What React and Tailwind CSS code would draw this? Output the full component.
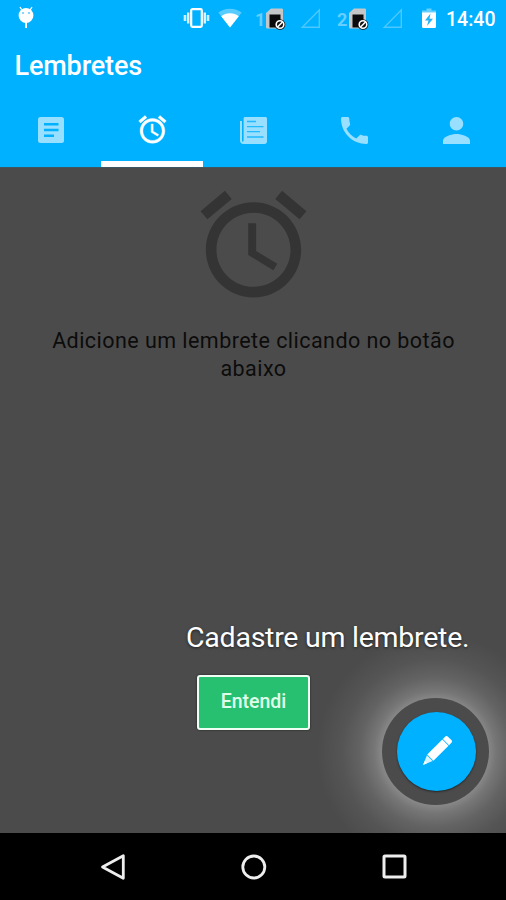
import clsx from "clsx";

const ALARM_PATH =
  "M22 5.72l-4.6-3.86-1.29 1.53 4.6 3.86L22 5.72zM7.88 3.39L6.6 1.86 2 5.71l1.29 1.53 4.59-3.85zM12.5 8H11v6l4.75 2.85.75-1.23-4-2.37V8zM12 4c-4.97 0-9 4.03-9 9s4.02 9 9 9c4.97 0 9-4.03 9-9s-4.03-9-9-9zm0 16c-3.87 0-7-3.13-7-7s3.13-7 7-7 7 3.13 7 7-3.13 7-7 7z";

function IconDebug({ className }) {
  return (
    <svg viewBox="0 0 18 23" fill="currentColor" className={className} aria-hidden>
      <path d="M3 1l2.5 4M15 1l-2.5 4" stroke="currentColor" strokeWidth="1.3" />
      <circle cx="9" cy="9.5" r="7.4" />
      <path d="M8.2 15h1.8v7H8.2z" />
      <circle cx="6" cy="7" r="1.1" fill="#66cfff" />
      <circle cx="12" cy="7" r="1.1" fill="#66cfff" />
    </svg>
  );
}

function IconVibrate({ className }) {
  return (
    <svg viewBox="0 0 27 22" fill="none" stroke="currentColor" className={className} aria-hidden>
      <rect x="8.2" y="2.2" width="10.6" height="17.6" rx="1.2" strokeWidth="2.2" />
      <path d="M5.2 5.5v11M21.8 5.5v11" strokeWidth="2.4" opacity=".85" />
      <path d="M2 8v6M25 8v6" strokeWidth="2.6" opacity=".8" />
    </svg>
  );
}

function IconWifi({ className }) {
  return (
    <svg viewBox="0 0 24 20" fill="currentColor" className={className} aria-hidden>
      <path d="M12 19.5L.3 4.6C3.5 2.2 7.5.8 12 .8s8.5 1.4 11.7 3.8z" opacity=".35" />
      <path d="M12 19.5L3.2 8.3C5.6 6.4 8.6 5.3 12 5.3s6.4 1.1 8.8 3z" />
    </svg>
  );
}

function IconSim({ className }) {
  return (
    <svg viewBox="0 0 20 22" className={className} aria-hidden>
      <path d="M5 .5h10.5c1 0 1.500.6 1.500 1.500v17c0 1-.6 1.500-1.500 1.500h-14C.5 20.500 0 20 0 19V5z" fill="#c4c6c8" />
      <path d="M3.500 6.500h11v13h-11z" fill="#0b0b0d" />
      <circle cx="14" cy="16.500" r="5.300" fill="#111" />
      <circle cx="14" cy="16.500" r="3.800" fill="none" stroke="#fff" strokeWidth="1.600" />
      <path d="M16.500 14l-5 5" stroke="#fff" strokeWidth="1.600" />
    </svg>
  );
}

function IconNoSignal({ className }) {
  return (
    <svg viewBox="0 0 21 20" fill="none" stroke="currentColor" strokeWidth="1.4" className={className} aria-hidden>
      <path d="M19.3 2v17.3H2.3z" />
    </svg>
  );
}

function IconBattery({ className }) {
  return (
    <svg viewBox="0 0 14 20" className={className} aria-hidden>
      <path d="M4.500.5h5v2H14V5H0V2.500h4.500z" fill="#fff" opacity=".4" />
      <path d="M0 4.500h14v14c0 .8-.5 1.500-1.300 1.500H1.300C.5 20 0 19.300 0 18.500z" fill="#fff" />
      <path d="M8.500 5.500L3 12.500h3.500L5 18l6-7.200H7.500z" fill="#22b4f7" />
    </svg>
  );
}

function IconNote({ className }) {
  return (
    <svg viewBox="0 0 26 26" className={className} aria-hidden>
      <rect width="26" height="26" rx="2.5" fill="#99dfff" />
      <path d="M6 7.3h14.5M6 13h14.5M6 18.7h10" stroke="#00b1ff" strokeWidth="2.4" />
    </svg>
  );
}

function IconNews({ className }) {
  return (
    <svg viewBox="0 0 27 27" className={className} aria-hidden>
      <path d="M5 0h20.500c.8 0 1.500.7 1.500 1.500v23c0 1.400-1 2.500-2.500 2.500h-21C1.300 27 0 25.700 0 23.500V4h2v19.500c0 .8.400 1.200.8 1.200s.8-.4.800-1.200V1.500C3.600.7 4.200 0 5 0z" fill="#99dfff" />
      <path d="M7 4.500h9M7 9.700h16.500M7 14.700h13M7 20h16.500" stroke="#22bbff" strokeWidth="1.3" />
    </svg>
  );
}

function IconPhone({ className }) {
  return (
    <svg viewBox="3 3 18 18" fill="#99dfff" className={className} aria-hidden>
      <path d="M6.620 10.790c1.440 2.830 3.760 5.140 6.590 6.590l2.200-2.200c.27-.27.67-.36 1.020-.24 1.120.37 2.330.57 3.570.57.55 0 1 .45 1 1V20c0 .55-.45 1-1 1-9.390 0-17-7.610-17-17 0-.55.45-1 1-1h3.500c.55 0 1 .45 1 1 0 1.250.2 2.450.57 3.570.11.35.03.74-.25 1.020l-2.200 2.200z" />
    </svg>
  );
}

function IconPerson({ className }) {
  return (
    <svg viewBox="4 4 16 16" fill="#99dfff" className={className} aria-hidden>
      <path d="M12 12c2.210 0 4-1.790 4-4s-1.790-4-4-4-4 1.790-4 4 1.790 4 4 4zm0 2c-2.670 0-8 1.340-8 4v2h16v-2c0-2.660-5.330-4-8-4z" />
    </svg>
  );
}

function IconAlarm({ className }) {
  return (
    <svg viewBox="0 0 24 24" fill="currentColor" stroke="currentColor" className={className} aria-hidden>
      <path d={ALARM_PATH} />
    </svg>
  );
}

function IconPencil({ className }) {
  return (
    <svg viewBox="0 0 32 32" fill="#fff" className={className} aria-hidden>
      <g transform="rotate(45 16 16)">
        <path d="M11.500-1.500c0-1 .8-1.700 1.700-1.700h5.600c1 0 1.700.8 1.700 1.700v3.700h-9z" />
        <path d="M11.500 3h9v22h-9z" />
        <path d="M11.800 25.800h8.400L16 35.500z" opacity=".85" />
        <path d="M14.300 31.500h3.400L16 35.600z" />
      </g>
    </svg>
  );
}

function StatusBar() {
  return (
    <div className="flex h-[38px] items-start pt-2 text-white">
      <IconDebug className="-mt-0.5 ml-[17px] h-[23px] w-[18px]" />
      <IconVibrate className="-mt-px ml-[148px] h-[22px] w-[27px]" />
      <IconWifi className="ml-2 h-5 w-6" />
      <span className="ml-[13px] w-[11px] text-[18px] leading-[23px] font-bold text-[#66cfff]">1</span>
      <IconSim className="h-[22px] w-5" />
      <IconNoSignal className="ml-[14px] h-5 w-[21px] text-[#4cc8ff]" />
      <span className="ml-4 w-3 text-[18px] leading-[23px] font-bold text-[#66cfff]">2</span>
      <IconSim className="h-[22px] w-5" />
      <IconNoSignal className="ml-[13px] h-5 w-[21px] text-[#4cc8ff]" />
      <IconBattery className="ml-[19px] h-5 w-3.5" />
      <span className="ml-[10px] text-[19.5px] leading-[24px] font-medium">14:40</span>
    </div>
  );
}

const TABS = [
  { id: "notas", icon: <IconNote className="size-[26px]" /> },
  { id: "lembretes", icon: <IconAlarm className="-mt-px ml-px size-[33px] text-white [stroke-width:0.3]" /> },
  { id: "noticias", icon: <IconNews className="size-[27px]" /> },
  { id: "telefone", icon: <IconPhone className="size-[27px]" /> },
  { id: "perfil", icon: <IconPerson className="ml-px size-[27px]" /> },
];

function TabBar({ active }) {
  return (
    <div className="grid h-[73px] grid-cols-[101px_102px_101px_101px_101px]">
      {TABS.map((tab) => (
        <button
          key={tab.id}
          type="button"
          aria-label={tab.id}
          className={clsx(
            "flex items-center justify-center border-b-[6px] pt-[5px]",
            tab.id === active ? "border-white" : "border-transparent"
          )}
        >
          {tab.icon}
        </button>
      ))}
    </div>
  );
}

function NavBar() {
  return (
    <nav className="flex h-[67px] items-center justify-between bg-black pr-[99px] pl-[100px] text-[#eee]">
      <svg viewBox="0 0 26 28" fill="none" stroke="currentColor" strokeWidth="2.8" strokeLinejoin="round" className="h-7 w-[26px]">
        <path d="M23.3 2.7v22.6L2.5 14z" />
      </svg>
      <svg viewBox="0 0 26 26" fill="none" stroke="currentColor" strokeWidth="2.8" className="size-[26px]">
        <circle cx="12.8" cy="13" r="11" />
      </svg>
      <svg viewBox="0 0 25 25" fill="none" stroke="currentColor" strokeWidth="3" className="size-[25px]">
        <rect x="2" y="2" width="21" height="21" rx="1" />
      </svg>
    </nav>
  );
}

export default function App() {
  return (
    <div className="flex h-[900px] w-[506px] flex-col overflow-hidden bg-[#4b4b4b] font-['Roboto',sans-serif]">
      <header className="h-[167px] shrink-0 bg-[#00b1ff]">
        <StatusBar />
        <h1 className="h-14 pl-[14.5px] text-[27px] leading-[56px] font-medium tracking-[-0.15px] text-white">
          Lembretes
        </h1>
        <TabBar active="lembretes" />
      </header>

      <main className="relative flex flex-1 flex-col overflow-hidden border-t border-[#3f5661]">
        <div className="flex flex-col items-center pt-[13px]">
          <IconAlarm className="size-[127px] text-[#343434] [stroke-width:0]" />
          <p className="mt-[19px] pl-px text-center text-[21.5px] leading-7 tracking-[0.45px] text-[#0c0c0c]">
            <span className="whitespace-nowrap">Adicione um lembrete clicando no botão</span>
            <br />
            abaixo
          </p>
        </div>

        {/* Spotlight around the action button */}
        <div className="absolute top-[464px] left-[315px] size-[240px] rounded-full bg-[radial-gradient(circle,#8a8a8a_0px,#8a8a8a_52px,#767676_61px,#636363_75px,#555555_93px,#4b4b4b_118px)]" />
        <div className="absolute top-[530px] left-[382px] flex size-[107px] items-center justify-center rounded-full bg-[#4b4b4b]">
          <button
            type="button"
            aria-label="Adicionar lembrete"
            className="ml-px flex size-[79px] items-center justify-center rounded-full bg-[#00b1ff] shadow-[0_1px_2px_rgba(0,0,0,0.5)]"
          >
            <IconPencil className="size-[31px] overflow-visible" />
          </button>
        </div>

        <div className="relative mt-[235px] pl-[186px]">
          <p className="text-[28.5px] leading-[40px] tracking-[-0.25px] whitespace-nowrap text-white [text-shadow:0_1px_3px_rgba(0,0,0,0.6)]">
            Cadastre um lembrete.
          </p>
          <button
            type="button"
            className="mt-[17px] ml-[11px] h-[55px] w-[113px] rounded-[3px] border-2 border-[#f0fff6] bg-[#27c070] pb-0.5 text-[19.5px] font-medium text-[#e0fdea] shadow-[0_0_2px_rgba(0,0,0,0.7)]"
          >
            Entendi
          </button>
        </div>
      </main>

      <NavBar />
    </div>
  );
}
